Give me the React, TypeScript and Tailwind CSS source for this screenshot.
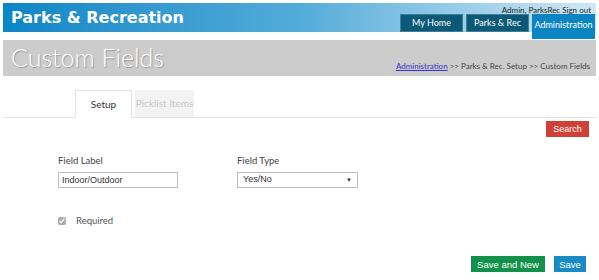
import React from 'react';

const ui = { fontFamily: 'Lato, "Noto Sans", sans-serif' };
const arial = { fontFamily: '"Liberation Sans", Arial, sans-serif' };

export default function App() {
  return (
    <div className="w-[599px] h-[280px] bg-white overflow-hidden px-[3px] pt-[3px]" style={ui}>
      {/* top banner */}
      <div className="relative h-[29px] flex items-end bg-gradient-to-r from-[#0686c6] via-[#52acd9] to-[#cfe8f4]">
        <div className="self-center pl-[8px] pt-[1px] text-white text-[16px] font-bold whitespace-nowrap" style={{ fontFamily: '"DejaVu Sans", sans-serif' }}>
          Parks &amp; Recreation
        </div>
        <div className="absolute right-[5px] top-[1px] text-[8px] text-[#222] whitespace-nowrap">
          Admin, ParksRec <span className="underline">Sign out</span>
        </div>
        <div className="ml-auto flex gap-[3px] pr-[1px] items-start">
          <div className="w-[63px] h-[18px] bg-[#0b5877] text-white text-[9px] flex items-center justify-center border border-[#3d7f99] whitespace-nowrap">My Home</div>
          <div className="w-[63px] h-[18px] bg-[#0b5877] text-white text-[9px] flex items-center justify-center border border-[#3d7f99] whitespace-nowrap">Parks &amp; Rec</div>
          <div className="w-[63px] h-[25px] -mb-[7px] bg-[#0a85c2] text-white text-[9px] flex justify-center pt-[4px] relative z-10 whitespace-nowrap">Administration</div>
        </div>
      </div>

      {/* title bar */}
      <div className="mt-[8px] h-[36px] bg-[#cccccc] flex items-end justify-between">
        <div className="pl-[8px] pb-[2px] text-white text-[25px] leading-[34px] font-light [text-shadow:1px_1px_1px_rgba(0,0,0,0.25)] whitespace-nowrap">Custom Fields</div>
        <div className="pr-[6px] pb-[4px] text-[8px] text-[#444] whitespace-nowrap">
          <span className="text-[#3333cc] underline">Administration</span> &gt;&gt; Parks &amp; Rec. Setup &gt;&gt; Custom Fields
        </div>
      </div>

      {/* tabs */}
      <div className="mt-[14px] flex items-end border-b border-[#e2e2e2] pl-[72px] gap-[3px]">
        <div className="w-[57px] h-[28px] -mb-px bg-white border border-[#e2e2e2] border-b-white text-[10px] text-[#333] flex items-center justify-center">Setup</div>
        <div className="w-[59px] h-[27px] bg-[#f3f3f3] text-[10px] text-[#c8c8c8] flex items-center justify-center whitespace-nowrap">Picklist Items</div>
      </div>

      <div className="flex justify-end pr-[7px] mt-[3px]">
        <button className="w-[43px] h-[16px] bg-[#cf4136] text-white text-[9px] leading-none" style={arial}>Search</button>
      </div>

      {/* form */}
      <div className="flex gap-[59px] pl-[55px] mt-[17px]">
        <div className="flex flex-col">
          <label className="text-[9.5px] text-[#444] leading-[14px]">Field Label</label>
          <input readOnly value="Indoor/Outdoor" className="mt-[4px] w-[120px] h-[16px] border border-[#bdbdbd] px-[3px] text-[9px] text-[#333] outline-none" style={arial} />
        </div>
        <div className="flex flex-col">
          <label className="text-[9.5px] text-[#444] leading-[14px]">Field Type</label>
          <div className="mt-[4px] w-[121px] h-[16px] border border-[#bdbdbd] px-[5px] flex items-center justify-between text-[9px] text-[#333]" style={arial}>
            <span>Yes/No</span>
            <span className="text-[6px]">▼</span>
          </div>
        </div>
      </div>

      <div className="flex items-center pl-[55px] mt-[26px] gap-[10px]">
        <input type="checkbox" readOnly checked className="w-[8px] h-[8px] accent-[#888] opacity-70" />
        <span className="text-[9.5px] text-[#555]">Required</span>
      </div>

      <div className="flex justify-end gap-[9px] pr-[10px] mt-[28px]">
        <button className="w-[74px] h-[16px] bg-[#12914a] text-white text-[9.5px] leading-none" style={arial}>Save and New</button>
        <button className="w-[32px] h-[16px] bg-[#1a8ac4] text-white text-[9.5px] leading-none" style={arial}>Save</button>
      </div>
    </div>
  );
}
